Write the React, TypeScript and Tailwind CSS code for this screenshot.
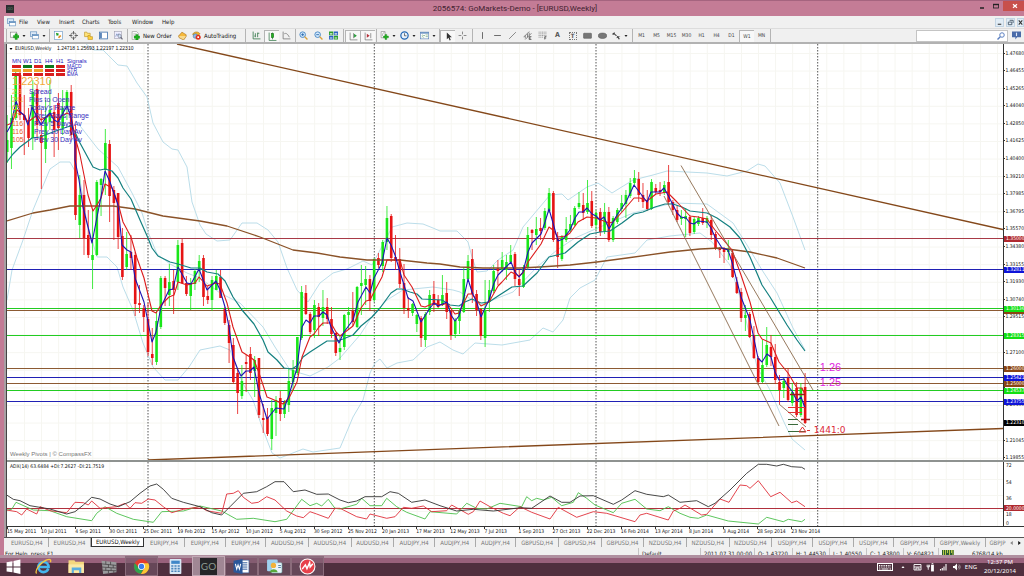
import type { ReactNode } from 'react';

/* ---------- chart data (plot units: one unit per screen dot) ---------- */

// colour, body top, body bottom, high, low - one entry per week
const CANDLES = `g 140 152 115 163,g 118 148 95 169,g 76 118 70 120,r 75 115 70 120,r 115 120 95 155,r 120 138 108 147,g 92 138 80 150,r 89 125 85 140,
r 135 143 110 189,g 117 149 100 163,g 110 122 80 130,r 112 130 105 157,r 103 128 93 150,g 108 128 90 135,g 92 108 90 120,r 92 135 85 140,
r 135 215 125 220,g 195 225 175 238,r 195 238 180 255,r 235 255 210 258,g 255 260 210 289,g 182 255 180 256,g 179 185 178 216,g 143 170 129 195,
r 144 196 140 222,r 190 203 186 240,r 193 237 193 249,r 236 277 228 280,g 254 267 232 270,r 252 258 235 270,r 255 304 252 316,r 303 305 285 313,
r 308 317 305 332,r 319 352 303 356,r 354 358 328 365,g 321 362 310 365,g 278 327 276 329,r 278 288 276 306,g 282 295 264 306,r 281 290 270 314,
g 245 282 240 290,r 243 283 239 284,r 283 294 276 296,g 283 296 278 310,g 271 284 269 290,g 261 271 255 282,r 258 297 255 306,r 296 300 286 304,
g 280 300 276 311,g 276 290 270 290,r 277 298 270 298,r 309 323 307 325,r 325 343 320 363,r 345 382 338 384,r 373 393 368 414,g 381 396 365 399,
r 362 364 355 392,r 354 373 347 380,g 360 371 356 397,r 358 415 358 418,r 418 420 404 433,r 417 434 408 436,g 408 439 400 450,g 400 413 396 436,
r 398 414 391 421,g 402 414 400 418,g 381 405 368 412,g 370 382 360 390,g 337 373 337 375,g 292 338 286 340,r 293 314 285 315,r 314 332 312 334,
g 305 330 300 338,r 307 317 303 336,g 307 318 290 326,r 307 319 298 324,r 319 334 307 338,r 333 353 333 356,g 348 352 336 360,g 315 347 314 350,
g 312 315 307 330,r 311 322 292 326,g 287 327 286 328,g 283 286 265 315,g 279 285 266 305,r 279 301 275 311,g 259 300 258 302,r 258 265 253 268,
g 242 266 240 272,g 218 242 206 250,r 216 258 214 262,r 257 261 235 270,r 259 284 248 288,r 283 308 264 314,r 308 310 297 318,g 304 313 303 316,
g 315 324 314 332,r 318 338 316 347,g 314 340 312 347,g 295 312 290 315,r 294 305 281 312,r 300 307 295 308,g 295 305 275 306,r 293 312 282 319,
r 311 335 310 340,g 320 334 318 338,g 311 321 308 334,g 279 312 267 313,g 261 279 255 281,r 259 294 249 303,r 294 310 290 316,r 309 336 308 340,
g 310 338 280 347,g 290 302 280 312,g 271 291 265 293,r 268 271 260 285,g 260 270 252 272,g 262 270 255 280,g 255 262 245 264,r 254 279 252 286,
r 279 285 270 296,g 267 287 265 288,g 235 268 227 270,r 230 233 229 250,g 229 235 217 245,r 228 231 218 240,g 211 228 208 230,g 193 211 188 213,
r 193 240 191 242,r 239 257 232 268,g 237 259 235 261,g 229 240 217 242,g 224 230 215 232,g 208 225 206 226,g 203 207 192 209,r 205 213 193 220,
g 203 212 180 214,r 201 226 191 228,g 213 225 210 230,r 212 232 208 236,g 212 231 203 234,r 212 240 207 242,g 218 240 216 242,g 210 222 208 224,
g 203 209 195 212,g 195 204 190 218,g 183 196 178 198,g 178 183 170 185,r 179 195 172 202,r 195 202 183 208,r 200 209 190 211,g 182 209 179 210,
r 188 192 184 194,r 190 192 182 196,g 185 193 181 195,r 182 202 165 205,r 202 210 200 215,r 210 220 205 222,g 217 219 210 225,g 216 219 208 237,
r 217 233 215 236,g 219 232 217 234,g 218 224 216 226,r 218 223 208 225,g 218 223 216 228,r 220 235 216 240,r 234 249 232 250,r 248 250 247 258,
r 249 252 247 263,g 249 252 240 260,r 253 277 250 278,r 282 293 277 294,r 292 318 288 322,g 315 318 305 331,r 314 337 312 338,r 335 358 326 359,
r 358 382 356 385,g 365 382 340 383,g 345 365 327 367,r 347 357 335 366,r 357 380 344 384,r 382 390 375 404,g 381 388 378 398,r 378 400 368 402,
g 392 403 383 406,r 388 415 382 417,g 388 415 383 417,r 387 423 373 424`
  .split(',')
  .map((row, i) => {
    const [kind, top, bottom, high, low] = row.trim().split(' ');
    return { x: 7.2 + i * 4.267, color: kind === 'g' ? '#19e619' : '#e61414', top: +top, bottom: +bottom, high: +high, low: +low };
  });

const FAST =
  '7,132 11,125 16,101 20,112 24,115 28,125 32,107 37,117 41,125 46,117 50,113 54,120 58,122 63,113 67,106 71,117 75,145 75,160 79,180 83,207 92,243 97,217 101,197 105,171 110,182 118,205 122,245 127,250 131,252 135,278 144,302 152,342 156,332 161,307 169,290 173,289 178,267 187,283 191,284 199,269 207,290 216,281 220,290 225,307 229,327 233,357 238,370 241,376 246,371 250,371 254,367 259,393 267,419 276,408 284,409 289,395 297,368 302,327 306,320 310,323 314,316 319,316 323,312 327,315 331,327 339,343 344,332 353,320 358,302 366,287 370,293 374,278 382,263 387,238 391,245 395,255 400,272 408,298 413,301 421,322 430,308 434,303 438,306 447,302 451,315 455,321 459,316 464,297 468,279 472,292 477,303 481,317 485,308 489,300 494,283 498,275 502,271 511,262 515,272 519,277 523,272 528,252 532,243 541,234 545,222 549,209 553,223 558,241 563,239 570,230 575,218 579,212 583,212 587,208 592,214 596,216 600,220 604,217 609,229 617,215 626,202 634,185 647,202 651,192 660,192 664,188 669,197 677,213 681,217 686,218 690,223 694,224 698,221 707,222 711,228 715,237 722,248 728,250 732,262 741,297 750,320 758,358 762,362 767,354 771,357 775,372 779,380 784,379 788,386 792,391 797,401 801,397 805,408';

const MEDIUM =
  '7,125 12,123 17,110 24,115 28,122 37,115 41,120 50,115 58,118 67,113 71,115 75,137 80,155 88,195 93,211 97,205 101,198 105,184 112,188 118,203 123,222 131,237 137,258 144,278 152,311 156,313 161,305 169,297 174,295 178,282 187,285 195,283 199,277 207,286 216,283 220,284 227,303 233,327 242,352 250,357 254,360 259,373 267,397 272,399 283,404 289,398 297,382 302,357 310,337 314,334 319,327 323,323 331,323 336,332 340,336 353,326 361,308 366,301 370,300 374,292 382,277 387,260 391,260 400,260 404,275 412,287 421,306 425,307 434,303 442,305 447,303 455,314 459,313 468,294 472,294 481,306 489,302 498,286 502,282 511,272 519,276 523,273 528,262 541,244 549,227 553,230 558,237 566,236 570,233 578,222 587,217 596,218 609,223 613,222 622,212 634,198 640,198 647,201 656,194 667,192 677,202 690,216 698,217 707,219 715,230 732,250 741,275 750,302 758,333 762,339 771,343 779,362 788,373 797,388 802,388 805,395';

const SLOW =
  '7,162 13,154 20,147 32,138 40,137 53,132 67,127 71,126 75,132 80,143 93,167 100,170 105,169 112,171 118,178 123,188 131,199 140,220 148,238 152,248 158,256 170,262 178,264 191,268 200,268 207,272 218,274 225,281 233,297 242,310 254,324 263,340 268,352 277,360 284,368 292,369 298,365 303,357 310,352 327,341 337,341 343,339 353,335 361,326 372,317 380,308 391,293 397,289 402,289 410,292 417,294 422,299 442,300 450,305 459,306 465,302 472,299 481,303 489,302 498,296 512,287 523,286 537,273 549,257 557,255 565,253 578,242 590,234 600,232 610,231 622,223 634,214 643,212 655,207 665,204 673,204 682,207 690,211 707,213 717,218 730,227 740,238 750,257 762,285 770,297 787,325 797,340 805,351';

const LONG =
  '7,221 33,213 50,210 70,206 87,206 113,206 135,209 163,216 200,221 227,226 260,237 293,250 317,253 340,257 367,260 400,260 427,263 440,264 460,267 483,268 520,268 540,267 570,265 597,262 627,258 670,252 700,249 720,248 750,252 777,258 805,268';

const BAND_UPPER =
  '86,44 94,50 103,50 118,65 127,66 137,83 147,97 153,123 163,142 172,149 178,150 187,167 192,202 200,225 206,234 217,241 230,240 242,223 257,223 268,230 278,242 287,268 297,290 308,302 320,283 333,273 347,269 363,261 372,265 387,237 392,227 407,223 423,224 433,228 440,231 457,231 468,242 472,257 477,272 487,271 498,260 513,250 523,227 550,195 562,194 568,200 587,187 598,183 612,193 633,180 653,175 667,171 707,173 727,176 747,171 758,164 765,166 780,183 793,217 805,250';
const BAND_MIDDLE =
  '77,122 98,149 107,157 118,167 132,193 142,213 148,232 157,254 170,264 187,273 200,278 220,293 240,303 263,327 275,347 290,370 310,376 328,367 340,358 360,335 373,315 387,300 403,290 433,287 453,290 460,292 480,305 513,292 537,267 557,250 575,238 600,227 633,213 673,203 707,204 733,223 747,245 762,270 777,293 793,328 805,350';
const BAND_LOWER =
  '7,300 12,270 23,240 33,210 50,169 60,162 70,162 80,180 87,223 97,257 107,257 117,267 123,287 133,310 143,343 153,367 165,380 178,380 189,367 200,350 220,346 230,350 242,382 253,400 262,427 272,453 280,458 303,449 313,452 340,448 353,417 363,400 370,373 375,363 380,359 387,368 397,363 413,360 427,347 440,342 453,350 463,354 475,343 502,345 530,340 543,328 553,332 563,320 570,298 580,288 595,280 607,257 635,253 647,240 670,236 700,233 712,242 730,265 743,307 757,367 770,390 783,420 792,439 805,450';

const LEVELS = [
  { y: 238, color: '#a83a46', price: '1.35000', fill: '#b02a30' },
  { y: 269, color: '#2020b4', price: '1.32811', fill: '#0f14d8' },
  { y: 310, color: '#8c5a32', price: '1.30000', fill: '#8b4513' },
  { y: 308, color: '#22cc22', price: '1.30136', fill: '#12e012' },
  { y: 335, color: '#22cc22', price: '1.28315', fill: '#12e012' },
  { y: 368, color: '#8c5a32', price: '1.26000', fill: '#8b4513' },
  { y: 377, color: '#2020b4', price: '1.25421', fill: '#0f14d8' },
  { y: 383, color: '#8c5a32', price: '1.25000', fill: '#8b4513' },
  { y: 390, color: '#22cc22', price: '1.24537', fill: '#12e012' },
  { y: 401, color: '#2020b4', price: '1.23755', fill: '#0f14d8' },
  { y: 422, color: '', price: '1.22310', fill: '#000000' },
];

// Ticks that sit under a level tag carry no text.
const PRICES = [
  '1.47680', '1.46455', '1.45265', '1.44040', '1.42850', '1.41625', '1.40400', '1.39210', '1.37985', '1.36795', '1.35570', '1.34380',
  '1.33155', '1.31930', '1.30740', '1.29515', '', '1.27100', '', '', '1.23460', '', '1.21045', '1.19855',
];

const DATES = [
  '15 May 2011', '10 Jul 2011', '4 Sep 2011', '30 Oct 2011', '25 Dec 2011', '19 Feb 2012', '15 Apr 2012', '10 Jun 2012',
  '5 Aug 2012', '30 Sep 2012', '25 Nov 2012', '20 Jan 2013', '17 Mar 2013', '12 May 2013', '7 Jul 2013', '1 Sep 2013',
  '27 Oct 2013', '22 Dec 2013', '16 Feb 2014', '13 Apr 2014', '8 Jun 2014', '3 Aug 2014', '28 Sep 2014', '23 Nov 2014',
];

const YEAR_LINES = [148, 374.3, 596, 817.7];
const GRID_X = Array.from({ length: 58 }, (_, i) => 24.5 + i * 17.07);
const GRID_Y = Array.from({ length: 24 }, (_, i) => 53.5 + i * 17.6);

// Indicator samples come in three sections, three samples per plot unit.
const SECTIONS = [
  {
    x: 0,
    adx: '20,165 40,178 60,182 90,197 150,207 200,222 225,215 250,195 275,172 300,177 330,192 355,200 390,185 420,160 450,138 470,132 490,148 515,175 550,187 600,200 635,218 665,225 690,200 730,160 770,155 800,140 825,125 852,125 880,155 915,150 950,163 985,162 1020,175 1050,188',
    minus: '20,210 50,215 65,225 80,207 110,222 120,200 150,212 200,218 225,187 250,188 265,195 275,183 300,205 350,200 375,190 390,205 405,188 425,190 445,177 465,180 490,200 515,218 550,208 600,200 620,212 665,220 680,162 700,160 715,152 730,172 755,190 775,187 800,170 825,180 860,213 890,228 910,233 930,215 950,222 985,235 1005,205 1040,215',
    plus: '20,210 35,208 48,187 100,210 150,212 200,230 275,242 290,220 315,200 350,220 400,238 460,247 485,215 550,213 600,198 665,213 710,238 760,235 825,245 860,238 905,178 930,197 950,190 965,198 985,178 1005,205 1050,200',
  },
  {
    x: 340,
    adx: '0,180 25,188 50,183 75,170 125,170 150,155 175,160 215,187 255,180 300,197 350,213 400,208 460,213 510,207 540,203 575,205 630,168 665,187 690,187 720,168 760,167 820,193 845,180 885,152 920,163 970,170 985,165 1020,187 1050,183',
    minus: '0,205 50,230 80,237 90,222 140,235 165,230 190,202 215,205 250,198 275,215 320,212 335,195 385,223 400,215 420,183 450,200 490,220 510,227 540,200 575,217 630,237 655,202 710,232 760,215 800,220 885,245 900,225 920,220 985,240 1000,213 1040,195',
    plus: '0,207 50,193 65,175 90,197 125,197 140,175 170,200 200,217 255,237 270,215 350,222 380,190 410,205 440,207 480,190 545,200 560,170 575,182 590,175 610,180 635,172 665,197 700,187 715,158 740,175 765,195 820,218 845,190 885,178 920,207 960,212 985,200 1050,232',
  },
  {
    x: 680,
    adx: '0,187 50,182 85,200 105,190 150,150 200,100 235,73 260,73 290,78 310,73 335,80 365,82 375,88',
    minus: '0,205 15,195 65,225 80,223 120,177 147,187 180,135 200,137 210,145 235,122 272,170 300,157 335,188 350,183 375,200',
    plus: '0,220 30,232 55,235 80,225 145,243 235,252 260,232 310,245 325,238 365,245 375,238',
  },
];

const series = (key: 'adx' | 'minus' | 'plus') =>
  SECTIONS.flatMap((s, n) =>
    s[key]
      .split(' ')
      .map((p) => p.split(',').map(Number))
      .map(([x, y]) => [s.x + x / 3, 440 + y / 3])
      .filter(([x]) => n === SECTIONS.length - 1 || x < SECTIONS[n + 1].x),
  )
    .map(([x, y]) => `${x.toFixed(1)},${y.toFixed(1)}`)
    .join(' ');

/* ---------- toolbar glyphs ---------- */

const glyphs: Record<string, ReactNode> = {
  newChart: (<><rect x="1" y="2" width="11" height="9" fill="#fff" stroke="#777" /><path d="M9 5h4v3h3v4h-3v3H9v-3H6V8h3z" fill="#1fb01f" stroke="#0b7a0b" strokeWidth=".6" /></>),
  profiles: (<><rect x="1" y="1.500" width="11" height="8" fill="#dbe9f7" stroke="#4a7fb5" /><rect x="4" y="6" width="11" height="8" fill="#fff" stroke="#4a7fb5" /><path d="M4 7.500h11" stroke="#4a7fb5" strokeWidth="2" /></>),
  market: (<><rect x="1" y="1" width="14" height="14" fill="#fff" stroke="#5b8fc0" /><path d="M4 4l3 3M7 4v3H4" stroke="#1a9c1a" strokeWidth="2" fill="none" /><path d="M8 12l4-4" stroke="#e08a1a" strokeWidth="3" /></>),
  crosshair: (<><circle cx="8" cy="8" r="5" fill="none" stroke="#555" strokeWidth="1.300" /><path d="M8 0v6M8 10v6M0 8h6M10 8h6" stroke="#555" strokeWidth="1.500" /></>),
  folder: (<><path d="M1 2h4l1 2h5v6H1z" fill="#ffe27a" stroke="#b58a12" /><path d="M7 8h3l1 2h4v5H7z" fill="#ffd13b" stroke="#b58a12" /></>),
  panel: (<><rect x="1" y="2" width="14" height="12" fill="#fff" stroke="#4576b0" strokeWidth="1.500" /><path d="M2 3h3v10H2z" fill="#4576b0" /></>),
  tester: (<><rect x="1" y="1" width="12" height="12" fill="#eef" stroke="#99a" /><path d="M3 10l2-5 2 3 2-4" stroke="#5577aa" fill="none" /><circle cx="10" cy="9" r="3" fill="#cfe3f7" stroke="#667" /><path d="M12 11l3 4" stroke="#667" strokeWidth="2" /></>),
  order: (<><path d="M2 1h8l3 3v11H2z" fill="#fff" stroke="#888" /><path d="M4 5h6M4 7.500h6" stroke="#999" /><path d="M8.500 6h4v3h3v4h-3v3h-4v-3h-3V9h3z" fill="#1fb01f" stroke="#0b7a0b" strokeWidth=".6" /></>),
  book: (<><path d="M1 9l6-7 8 5-5 7z" fill="#f6b93b" stroke="#a86a08" /><path d="M1 9l1 3 8 4 5-7" fill="#f9d98a" stroke="#a86a08" /></>),
  auto: (<><path d="M1 6c3-6 11-5 13-1l-3 3H4z" fill="#f0b429" stroke="#a3720a" /><circle cx="6" cy="9" r="4" fill="#8db9e6" stroke="#3a6ea5" /><circle cx="11" cy="11" r="4.500" fill="#e0301e" /><rect x="9.500" y="9.500" width="3" height="3" fill="#fff" /></>),
  bars: <path d="M2 1v13h13M6 4v7M6 9H4M10 3v8M10 4h3" stroke="#3b7d4f" strokeWidth="1.500" fill="none" />,
  candles: (<><path d="M2 1v14h13M8 1v12" stroke="#3b7d4f" strokeWidth="1.400" fill="none" /><rect x="6" y="3" width="4" height="7" fill="#22b322" stroke="#136b13" /></>),
  line: <path d="M2 1v13h13M4 5c3-2 6 0 9 6" stroke="#777" strokeWidth="1.400" fill="none" />,
  zoomIn: (<><circle cx="6.500" cy="6.500" r="5" fill="#d3e8fb" stroke="#3c7fc0" strokeWidth="1.500" /><path d="M4 6.500h5M6.500 4v5" stroke="#2465a8" strokeWidth="1.500" /><path d="M10 10l5 5" stroke="#d9a13a" strokeWidth="2.500" /></>),
  zoomOut: (<><circle cx="6.500" cy="6.500" r="5" fill="#d3e8fb" stroke="#3c7fc0" strokeWidth="1.500" /><path d="M4 6.500h5" stroke="#2465a8" strokeWidth="1.500" /><path d="M10 10l5 5" stroke="#d9a13a" strokeWidth="2.500" /></>),
  tile: (<><path d="M0 1h7.500v6.500H0zM8.500 8.500H16V15H8.500z" fill="#2b9e2b" /><path d="M8.500 1H16v6.500H8.500zM0 8.500h7.500V15H0z" fill="#2b63c4" /><path d="M1.500 4h4.500v2H1.500zM10 4h4.500v2H10zM1.500 11.500h4.500v2H1.500zM10 11.500h4.500v2H10z" fill="#e9f4e9" /></>),
  shift: (<><path d="M2 1v13h13M8 2v9" stroke="#777" strokeWidth="1.300" fill="none" /><path d="M9 3l5 3.500L9 10z" fill="#2a9d3c" /></>),
  scroll: (<><path d="M2 1v13h13M12 2v9" stroke="#777" strokeWidth="1.300" fill="none" /><path d="M5 3l5 3.500L5 10z" fill="#b5303a" /></>),
  indicators: (<><path d="M2 1h7v11H2z" fill="#fff" stroke="#777" /><path d="M4 9c1-6 2-6 4-6" stroke="#777" fill="none" /><path d="M9 6h3v3h3v3h-3v3H9v-3H6V9h3z" fill="#1fb01f" stroke="#0b7a0b" strokeWidth=".6" /></>),
  clock: (<><circle cx="8" cy="8" r="6.500" fill="#e9f3fd" stroke="#2468b4" strokeWidth="2.200" /><path d="M8 4v4.500h3.500" stroke="#444" strokeWidth="1.300" fill="none" /></>),
  template: (<><rect x="0.500" y="2" width="15" height="12" fill="#fff" stroke="#4576b0" /><path d="M1 3.500h14" stroke="#4576b0" strokeWidth="2" /><path d="M3 8l2-1 2 2 2-2M3 11l2-1 2 2M10 7h4M10 10h4" stroke="#4e8f5c" fill="none" /></>),
  cursor: <path d="M5 1v12l3-3 2 5 2-1-2-4.500h4z" fill="#333" />,
  cross: <path d="M8 1v5M8 10v5M1 8h5M10 8h5" stroke="#666" strokeWidth="1.300" />,
  vline: <path d="M8 2v12" stroke="#555" strokeWidth="1.500" />,
  hline: <path d="M2 8h12" stroke="#555" strokeWidth="1.500" />,
  trend: <path d="M2 14L14 2" stroke="#666" strokeWidth="1.300" />,
  channel: (<><path d="M1 11L11 1M4 15L15 4M4 8v5M8 5v6M11 3v5" stroke="#555" strokeWidth="1.200" /><path d="M15 10h-4v5h4M11 12.500h3" stroke="#333" strokeWidth="1.200" fill="none" /></>),
  fibo: (<><path d="M1 2h14M1 5h14M1 8h14M1 11h9" stroke="#666" strokeDasharray="2 1" /><path d="M15 10h-3v5M12 12.500h2.500" stroke="#333" strokeWidth="1.200" fill="none" /></>),
  rect: <rect x="1" y="4" width="14" height="9" rx="1" fill="#777" stroke="#555" />,
  ellipse: <ellipse cx="8" cy="8.500" rx="7.500" ry="4.800" fill="#777" stroke="#555" />,
  arrows: <path d="M1 4l4-2v3l4 3-2 1-3-3-3 1zM9 9l6 1-3 1 2 3-2 1-2-3-2 1z" fill="#444" />,
};

function Glyph({ name, className = 'h-[9px] w-[9px]' }: { name: string; className?: string }) {
  return (
    <svg viewBox="0 0 16 16" className={`${className} shrink-0`} aria-hidden="true">
      {glyphs[name]}
    </svg>
  );
}

function Tool({ name, label, wide, pressed, children }: { name?: string; label: string; wide?: boolean; pressed?: boolean; children?: ReactNode }) {
  return (
    <button
      aria-label={label}
      className={`flex h-3 shrink-0 items-center justify-center gap-[3px] leading-none ${wide ? 'w-5' : 'w-[15px]'} ${
        pressed ? 'border-t border-l border-[#b5b5b5] bg-[#f8f8f8]' : ''
      }`}
    >
      {name ? <Glyph name={name} /> : children}
      {wide && (
        <svg viewBox="0 0 6 4" className="h-[2px] w-[4px]" aria-hidden="true">
          <path d="M0 0h6L3 4z" fill="#222" />
        </svg>
      )}
    </button>
  );
}

function Divider({ className }: { className: string }) {
  return (
    <span className={`flex h-[13px] shrink-0 justify-center ${className}`}>
      <span className="w-px bg-[#b4b4b4]" />
    </span>
  );
}

function TitleBar() {
  return (
    <header className="flex h-4 items-center border-t border-[#a5647f] bg-[#c47c96]">
      <span className="ml-[6px] flex h-2 w-2 items-center justify-center bg-[#2c2c30] text-[4px] leading-none text-[#5d8a68]">GO</span>
      <h1 className="flex-1 pl-[42px] text-center font-['Roboto',sans-serif] text-[8px] leading-none text-[#3f2230]">
        2056574: GoMarkets-Demo - [EURUSD,Weekly]
      </h1>
      <div className="flex h-[10px] self-start">
        <button aria-label="Minimize" className="flex w-[15px] items-center justify-center">
          <svg viewBox="0 0 8 8" className="h-2 w-2"><path d="M2 6h4" stroke="#222" strokeWidth="1.500" /></svg>
        </button>
        <button aria-label="Maximize" className="flex w-[14px] items-center justify-center">
          <svg viewBox="0 0 8 8" className="h-2 w-2"><rect x="1.500" y="2.500" width="5" height="3.500" fill="none" stroke="#222" strokeWidth=".8" /><path d="M1 2.500h6" stroke="#222" strokeWidth="1.400" /></svg>
        </button>
        <button aria-label="Close" className="flex w-[21px] items-center justify-center bg-[#c8504c]">
          <svg viewBox="0 0 8 8" className="ml-[3px] h-2 w-2"><path d="M2 2.200l4 3.600M6 2.200l-4 3.600" stroke="#fff" strokeWidth="1.200" /></svg>
        </button>
      </div>
    </header>
  );
}

const MENU = [
  { label: 'File', className: 'w-[18px]' },
  { label: 'View', className: 'w-[22px]' },
  { label: 'Insert', className: 'w-[23px]' },
  { label: 'Charts', className: 'w-[26px]' },
  { label: 'Tools', className: 'w-6' },
  { label: 'Window', className: 'w-[30px]' },
  { label: 'Help', className: 'w-6' },
];

function MenuBar() {
  return (
    <nav className="flex h-3 items-center bg-[#f0f0f0] pl-[3px] text-[6px] text-[#222]">
      <Glyph name="profiles" className="mr-[3px] h-[9px] w-[9px]" />
      {MENU.map((m) => (
        <button key={m.label} className={`h-3 text-left leading-[12px] ${m.className}`}>
          {m.label}
        </button>
      ))}
      <div className="ml-auto flex gap-[2px] pl-2">
        <button aria-label="Minimize chart" className="flex h-[9px] w-[9px] items-center justify-center border border-[#c3d5e4] bg-[#e1ecf5]">
          <svg viewBox="0 0 8 8" className="h-[7px] w-[7px]"><path d="M2 6h4" stroke="#333" strokeWidth="1.200" /></svg>
        </button>
        <button aria-label="Restore chart" className="flex h-[9px] w-[9px] items-center justify-center border border-[#c3d5e4] bg-[#e1ecf5]">
          <svg viewBox="0 0 8 8" className="h-[7px] w-[7px]"><path d="M3 1.500h4v3M1.500 3.500h4v3h-4z" fill="none" stroke="#456" /></svg>
        </button>
        <button aria-label="Close chart" className="flex h-[9px] w-[7px] items-center justify-center border border-[#c3d5e4] bg-[#e1ecf5]">
          <svg viewBox="0 0 8 8" className="h-[7px] w-[7px] shrink-0"><path d="M2 1.500l4 5M6 1.500l-4 5" stroke="#333" strokeWidth="1.200" /></svg>
        </button>
      </div>
    </nav>
  );
}

const FRAMES = ['M1', 'M5', 'M15', 'M30', 'H1', 'H4', 'D1', 'W1', 'MN'];

function Toolbar() {
  return (
    <div className="flex h-[14px] items-center border-t border-[#dcdcdc] bg-[#f0f0f0] text-[6px] text-[#111]">
      <Divider className="w-1" />
      <Tool name="newChart" label="New chart" wide />
      <Tool name="profiles" label="Profiles" wide />
      <Divider className="w-[3px]" />
      <Tool name="market" label="Market watch" />
      <Tool name="crosshair" label="Data window" />
      <Tool name="folder" label="Navigator" />
      <Tool name="panel" label="Terminal" />
      <Tool name="tester" label="Strategy tester" />
      <Divider className="w-[3px]" />
      <button className="flex h-3 w-[46px] shrink-0 items-center gap-[3px] pl-[2px] leading-none whitespace-nowrap">
        <Glyph name="order" /> New Order
      </button>
      <Tool name="book" label="MetaEditor" />
      <button className="flex h-3 w-[51px] shrink-0 items-center gap-[3px] pl-[2px] leading-none whitespace-nowrap">
        <Glyph name="auto" /> AutoTrading
      </button>
      <Divider className="w-2" />
      <Tool name="bars" label="Bar chart" />
      <Tool name="candles" label="Candlesticks" pressed />
      <Tool name="line" label="Line chart" />
      <Divider className="w-[2px]" />
      <Tool name="zoomIn" label="Zoom in" />
      <Tool name="zoomOut" label="Zoom out" />
      <Tool name="tile" label="Tile windows" />
      <Divider className="w-1" />
      <Tool name="shift" label="Auto scroll" pressed />
      <Tool name="scroll" label="Chart shift" pressed />
      <Divider className="w-[3px]" />
      <Tool name="indicators" label="Indicators" wide />
      <Tool name="clock" label="Periods" wide />
      <Tool name="template" label="Templates" wide />
      <Divider className="w-[2px]" />
      <Tool name="cursor" label="Cursor" pressed />
      <Tool name="cross" label="Crosshair" />
      <Divider className="w-[5px]" />
      <Tool name="vline" label="Vertical line" />
      <Tool name="hline" label="Horizontal line" />
      <Tool name="trend" label="Trendline" />
      <Tool name="channel" label="Channel" />
      <Tool name="fibo" label="Fibonacci" />
      <Tool label="Text"><span className="text-[7px] leading-none font-bold text-[#555]">A</span></Tool>
      <Tool label="Text label"><span className="flex h-[8px] w-[8px] items-center justify-center border border-dotted border-[#777] text-[6px] leading-none font-bold text-[#555]">T</span></Tool>
      <Tool name="rect" label="Rectangle" />
      <Tool name="ellipse" label="Ellipse" />
      <Tool name="arrows" label="Arrows" wide />
      <Divider className="w-1" />
      {FRAMES.map((f) => (
        <Tool key={f} label={f} pressed={f === 'W1'}>
          <span className="text-[5px] leading-none text-[#444]">{f}</span>
        </Tool>
      ))}
      <Divider className="w-[3px]" />
      <label className="ml-auto flex h-3 w-[92px] items-center border border-[#c4c4c4] bg-white">
        <input aria-label="Search" className="h-full min-w-0 flex-1 bg-transparent pl-1 outline-none" />
        <svg viewBox="0 0 16 16" className="mr-[2px] h-[8px] w-[8px]" aria-hidden="true">
          <circle cx="10" cy="6" r="4.500" fill="none" stroke="#5b7fc0" strokeWidth="2" />
          <path d="M6.500 9.500L1 15" stroke="#5b7fc0" strokeWidth="2.800" />
        </svg>
      </label>
      <button aria-label="Messages" className="flex w-4 items-center justify-center">
        <svg viewBox="0 0 16 16" className="h-[9px] w-[9px]"><path d="M0 1h16v10H9l-3 4v-4H0z" fill="#4a6ba8" /><path d="M7 3h2v6H7z" fill="#dfe8f8" /></svg>
      </button>
    </div>
  );
}

/* ---------- chart ---------- */

const SIGNALS = [
  ['#d91e1e', '#0e7a1c', '#d91e1e', '#0e7a1c', '#d91e1e'],
  ['#f0a028', '#f0a028', '#f0a028', '#d91e1e', '#d91e1e'],
  ['#d91e1e', '#d91e1e', '#d91e1e', '#d91e1e', '#d91e1e'],
];

const STATS = [
  { value: '2.3', label: 'Spread', color: 'text-[#f5b04a]', indent: 'w-[17px]' },
  { value: '241', label: 'Pips to Open', color: 'text-[#f5b04a]', indent: 'w-[17px]' },
  { value: '63', label: "Today's Range", color: 'text-[#f5a030]', indent: 'w-[17px]' },
  { value: '97', label: 'Prev Days Range', color: 'text-[#f09030]', indent: 'w-[22px]' },
  { value: '116', label: 'Prev 5 Days Av', color: 'text-[#e8601c]', indent: 'w-[22px]' },
  { value: '116', label: 'Prev 10 Day Av', color: 'text-[#e8601c]', indent: 'w-[22px]' },
  { value: '105', label: 'Prev 30 Day Av', color: 'text-[#e8501c]', indent: 'w-[22px]' },
];

function InfoPanel() {
  return (
    <div className="absolute top-0 left-0 z-10 text-[#111]">
      <p className="flex h-[9px] items-center gap-[2px] pl-[2px] text-[5px] leading-none whitespace-nowrap">
        <svg viewBox="0 0 6 4" className="h-[2px] w-[4px]" aria-hidden="true"><path d="M0 0h6L3 4z" fill="#000" /></svg>
        <span className="w-[40px]">EURUSD,Weekly</span>
        <span className="font-['Liberation_Sans',sans-serif]">1.24718 1.25693 1.22197 1.22310</span>
      </p>
      <div className="pt-1 pl-[5px] font-['Liberation_Sans',sans-serif]">
        <div className="flex h-[7px] items-center text-[6px] leading-none text-[#2a22c0]">
          {['MN', 'W1', 'D1', 'H4', 'H1'].map((t) => (
            <span key={t} className="w-[11px]">{t}</span>
          ))}
          <span>Signals</span>
        </div>
        {SIGNALS.map((row, r) => (
          <div key={r} className="flex h-[4px] items-center gap-[2px]">
            {row.map((c, i) => (
              <span key={i} className="h-[3px] w-[9px]" style={{ backgroundColor: c }} />
            ))}
            <span className="text-[5px] leading-[4px] text-[#2a22c0]">{['MACD', 'STR', 'EMA'][r]}</span>
          </div>
        ))}
        <p className="text-[11px] leading-[11px] text-[#f2a93b]">1.22310</p>
        {STATS.map((s) => (
          <p key={s.label} className="flex h-2 items-center text-[7px] leading-none whitespace-nowrap">
            <span className={`${s.indent} ${s.color}`}>{s.value}</span>
            <span className="text-[#3a30c0]">{s.label}</span>
          </p>
        ))}
      </div>
    </div>
  );
}

function PricePlot() {
  return (
    <div className="relative min-h-0 min-w-0 flex-1 overflow-hidden bg-white">
      <InfoPanel />
      <p className="absolute bottom-[3px] left-[3px] z-10 font-['Liberation_Sans',sans-serif] text-[6px] leading-none text-[#777]">Weekly Pivots | © CompassFX</p>
      <svg viewBox="7 44 996 416" preserveAspectRatio="none" className="absolute inset-0 h-full w-full" fill="none" role="img" aria-label="EURUSD weekly candlestick chart">
        <g stroke="#f6f6f1" strokeWidth="1">
          {GRID_X.map((x) => <path key={x} d={`M${x} 44V460`} />)}
          {GRID_Y.map((y) => <path key={y} d={`M7 ${y}H1003`} />)}
        </g>
        <g stroke="#555" strokeDasharray="1.500 1.500" strokeWidth="1">
          {YEAR_LINES.map((x) => <path key={x} d={`M${x} 44V460`} />)}
        </g>
        <g stroke="#b3d9e6" strokeWidth=".9">
          <polyline points={BAND_UPPER} />
          <polyline points={BAND_MIDDLE} />
          <polyline points={BAND_LOWER} />
        </g>
        {LEVELS.filter((l) => l.color).map((l) => (
          <path key={l.price} d={`M7 ${l.y + 0.5}H1003`} stroke={l.color} strokeWidth="1" />
        ))}
        <g>
          {CANDLES.map((c) => (
            <g key={c.x}>
              <path d={`M${c.x} ${c.high}V${c.low}`} stroke={c.color} strokeWidth=".8" />
              <rect x={c.x - 1.3} y={c.top} width="2.600" height={c.bottom - c.top} fill={c.color} />
            </g>
          ))}
        </g>
        <g strokeLinejoin="round">
          <polyline points={LONG} stroke="#8a5228" strokeWidth="1.300" />
          <polyline points={SLOW} stroke="#148080" strokeWidth="1.200" />
          <polyline points={MEDIUM} stroke="#dc1c1c" strokeWidth="1.100" />
          <polyline points={FAST} stroke="#1c14b4" strokeWidth="1.100" />
        </g>
        <path d="M177 44L1003 229.500M148 460L1003 428.500" stroke="#84481a" strokeWidth="1.300" />
        <path d="M681 165.500L813 390M664 196L779 426M779 404L806 427" stroke="#8a6a4c" strokeWidth=".9" />
        <path d="M788 407.500h17M788 412.500h14" stroke="#d33" strokeWidth="1" />
        <path d="M788 419.500h10M788 424.500h10M788 431.500h17" stroke="#3a6a3a" strokeWidth="1" />
        <path d="M790 394.500h15M801 419.500h9" stroke="#a01818" strokeWidth="1.400" />
        <path d="M799 432l3.500-5 3.500 5zM807 430.500h3" stroke="#d33" />
      </svg>
      <div className="absolute top-[76%] left-[81.6%] font-['Liberation_Sans',sans-serif] text-[11px] leading-[15px] text-[#e01ee0]">
        <p>1.26</p>
        <p>1.25</p>
      </div>
      <p className="absolute top-[91.600%] left-[81%] font-['DejaVu_Sans',sans-serif] text-[9px] leading-[11px] text-[#dc2a3a]">1441:0</p>
    </div>
  );
}

function PriceAxis() {
  return (
    <div className="relative flex w-[21px] shrink-0 flex-col justify-between border-l border-[#333] bg-white pt-[7px] font-['DejaVu_Sans_Condensed','DejaVu_Sans',sans-serif] text-[5px] text-[#111]">
      {PRICES.map((p, i) => (
        <span key={i} className="flex h-1 items-center leading-none before:mr-px before:h-px before:w-px before:bg-[#333]">{p}</span>
      ))}
      {LEVELS.map((l) => (
        <span
          key={l.price}
          className="absolute left-0 flex h-[6px] w-full -translate-y-1/2 items-center pl-[2px] text-[5px] leading-none text-white"
          style={{ top: `${((l.y + 0.5 - 44) / 416) * 100}%`, backgroundColor: l.fill }}
        >
          {l.price}
        </span>
      ))}
    </div>
  );
}

function IndicatorPlot() {
  return (
    <div className="flex h-[64px] shrink-0">
      <div className="relative min-w-0 flex-1 overflow-hidden bg-white">
        <svg viewBox="7 462 996 64" preserveAspectRatio="none" className="absolute inset-0 h-full w-full" fill="none" role="img" aria-label="ADX indicator">
          <g stroke="#f6f6f1">
            {GRID_X.map((x) => <path key={x} d={`M${x} 462V526`} />)}
            {[479, 495, 511].map((y) => <path key={y} d={`M7 ${y}.500H1003`} />)}
          </g>
          <g stroke="#555" strokeDasharray="1.500 1.500">
            {YEAR_LINES.map((x) => <path key={x} d={`M${x} 462V526`} />)}
          </g>
          <path d="M7 508.500H1003" stroke="#b0303c" />
          <polyline points={series('plus')} stroke="#4cc04c" strokeWidth=".9" />
          <polyline points={series('minus')} stroke="#e0303a" strokeWidth=".9" />
          <polyline points={series('adx')} stroke="#333" strokeWidth=".9" />
        </svg>
        <p className="absolute top-px left-[3px] text-[5px] leading-[6px] text-[#111]">ADX(14) 63.6484 +DI:7.2627 -DI:21.7519</p>
      </div>
      <div className="relative grid w-[21px] shrink-0 grid-rows-[17px_16px_16px_9px_6px] border-l border-[#333] bg-white pl-[2px] text-[5px] leading-[6px] text-[#111]">
        {['72', '54', '36', '18', '0'].map((v) => <span key={v}>{v}</span>)}
        <span className="absolute top-[43px] left-0 flex h-[6px] w-full items-center bg-[#b02a30] pl-[2px] leading-none text-white">20.0000</span>
      </div>
    </div>
  );
}

function TimeAxis() {
  return (
    <div className="flex h-[11px] shrink-0 border-t border-[#333] bg-white">
      <div className="grid min-w-0 flex-1 grid-cols-[repeat(24,minmax(0,341fr))_minmax(0,1776fr)] font-['DejaVu_Sans_Condensed','DejaVu_Sans',sans-serif] text-[5px] leading-[9px] text-[#111]">
        {DATES.map((d) => (
          <span key={d} className="relative whitespace-nowrap before:absolute before:top-0 before:left-0 before:h-[2px] before:w-px before:bg-[#333]">{d}</span>
        ))}
      </div>
      <div className="w-[21px] shrink-0" />
    </div>
  );
}

const TABS = [
  'EURUSD,H4', 'EURUSD,H4', 'EURUSD,Weekly', 'EURJPY,H4', 'EURJPY,H4', 'EURJPY,H4', 'AUDUSD,H4', 'AUDUSD,H4', 'AUDUSD,H4',
  'AUDJPY,H4', 'AUDJPY,H4', 'AUDJPY,H4', 'GBPUSD,H4', 'GBPUSD,H4', 'GBPUSD,H4', 'NZDUSD,H4', 'NZDUSD,H4', 'NZDUSD,H4',
  'USDJPY,H4', 'USDJPY,H4', 'USDJPY,H4', 'GBPJPY,H4', 'GBPJPY,Weekly', 'GBPJP',
];

function tabClass(name: string) {
  if (name === 'EURUSD,Weekly') return 'w-[53px] shrink-0 border border-t-0 border-[#333] bg-white text-[#111]';
  if (name === 'GBPJPY,Weekly') return 'w-[51px] shrink-0 border-r border-[#aaa]';
  if (name === 'GBPJP') return 'w-[23px] shrink-0';
  return name.includes('JPY') ? 'w-[41px] border-r border-[#aaa]' : 'w-[43px] border-r border-[#aaa]';
}

function ChartTabs() {
  return (
    <div className="flex h-[11px] shrink-0 border-t border-[#555] bg-[#f0f0f0] text-[6px] text-[#777]">
      <div className="flex min-w-0 flex-1 pl-[2px]">
        {TABS.map((t, i) => (
          <button key={i} className={`h-[9px] text-center leading-[8px] whitespace-nowrap ${tabClass(t)}`}>{t}</button>
        ))}
      </div>
      <button aria-label="Scroll tabs left" className="flex w-[9px] items-center pl-px"><svg viewBox="0 0 4 6" className="h-1 w-[3px]"><path d="M4 0v6L0 3z" fill="#888" /></svg></button>
      <button aria-label="Scroll tabs right" className="flex w-[6px] items-center"><svg viewBox="0 0 4 6" className="h-1 w-[3px]"><path d="M0 0v6l4-3z" fill="#111" /></svg></button>
    </div>
  );
}

function StatusBar() {
  const cell = 'border-l border-[#c4c4c4] pl-[3px]';
  return (
    <footer className="flex h-[7px] shrink-0 bg-[#f0f0f0] pl-px text-[6px] leading-[11px] whitespace-nowrap text-[#222]">
      <span className="flex-1">For Help, press F1</span>
      <span className={`${cell} w-[62px]`}>Default</span>
      <span className={`${cell} w-[54px]`}>2011.07.31 00:00</span>
      <span className={`${cell} w-[38px]`}>O: 1.43720</span>
      <span className={`${cell} w-[37px]`}>H: 1.44530</span>
      <span className={`${cell} w-[37px]`}>L: 1.40550</span>
      <span className={`${cell} w-[37px]`}>C: 1.43800</span>
      <span className={`${cell} w-[35px]`}>V: 604821</span>
      <span className={`${cell} w-[34px]`}>
        <svg viewBox="0 0 12 6" className="mt-[2px] h-[6px] w-3" aria-hidden="true">
          <path d="M0 0h12v6H0z" fill="#2b5d30" /><path d="M1.500 0v6M3.500 0v6M5.500 0v3M7.500 0v5M9.500 0v3M11 0v5" stroke="#b8c848" />
        </svg>
      </span>
      <span className="w-[52px]">6768/14 kb</span>
    </footer>
  );
}

/* ---------- taskbar ---------- */

function AppButton({ label, className, children }: { label: string; className?: string; children: ReactNode }) {
  return (
    <button aria-label={label} className={`flex h-[20px] shrink-0 items-center justify-center ${className ?? 'w-8'}`}>
      <svg viewBox="0 0 32 32" className="h-[17px] w-[17px]" aria-hidden="true">{children}</svg>
    </button>
  );
}

function Taskbar() {
  const open = 'w-[33px] border border-[#8b6c7b] bg-[#77596a]/60';
  return (
    <div className="flex h-[21px] shrink-0 items-end bg-[linear-gradient(#b090a0_0_3px,#98617b_3px_8px,#4f2f3e_8px)]">
      <AppButton label="Start" className="w-[27px]">
        <path d="M3 8l11-2v10H3zM16 5.500L29 3v13H16zM3 18h11v9L3 25.500zM16 18h13v12l-13-2.500z" fill="#fff" />
      </AppButton>
      <AppButton label="Internet Explorer">
        <path d="M25 20c-1.500 4-5 6.500-9 6.500A9.500 9.500 0 1 1 25.500 17H9" fill="none" stroke="#45b6ee" strokeWidth="5" />
        <path d="M3 29c-4-4 6-20 18-25 7-3 10-1 8 4" fill="none" stroke="#f5c542" strokeWidth="2.500" />
      </AppButton>
      <AppButton label="File Explorer" className="w-[34px]">
        <path d="M1 4h11l2 3h16v21H1z" fill="#f4d77e" /><path d="M1 12h29v16H1z" fill="#fbe9a6" /><path d="M7 18h18v10h-4v-5H11v5H7z" fill="#5aaee0" />
      </AppButton>
      <AppButton label="Firewall">
        <path d="M1 5l28 3v19L4 30z" fill="#9a9a9c" /><path d="M1 11l28 3M2 17l27 2M3 23l26 1M9 6v6M18 7v6M14 12v6M23 13v6M9 18v6M19 19v5M14 23v6M24 24v4" stroke="#4a4548" strokeWidth="1.500" />
      </AppButton>
      <AppButton label="Chrome" className={open}>
        <circle cx="16" cy="16" r="14" fill="#e33b2e" /><path d="M3.500 9.500A14 14 0 0 0 15 30l6-11-10 0z" fill="#2ea44f" /><path d="M15 30A14 14 0 0 0 29 10H16l6 9z" fill="#fcc934" /><circle cx="16" cy="16" r="6.500" fill="#fff" /><circle cx="16" cy="16" r="5" fill="#3b7ded" />
      </AppButton>
      <AppButton label="Calculator" className="w-[34px]">
        <rect x="5" y="2" width="22" height="28" rx="1.500" fill="#d9e8f5" /><rect x="8" y="5" width="16" height="6" fill="#3f87c8" /><path d="M8 15h4M14 15h4M20 15h4M8 20h4M14 20h4M20 20h4M8 25h4M14 25h4M20 25h4" stroke="#4a84bb" strokeWidth="3" />
      </AppButton>
      <button aria-label="GoMarkets" className="flex h-[20px] w-[33px] shrink-0 items-center justify-center border border-[#c3aab6] bg-[#a08794]">
        <span className="flex h-[17px] w-[17px] items-center justify-center bg-[#252528] font-['Lato',sans-serif] text-[10px] leading-none text-[#8b9a90]">GO</span>
      </button>
      <AppButton label="Word" className={open}>
        <rect x="14" y="4" width="16" height="24" fill="#fff" stroke="#2b579a" /><path d="M17 9h10M17 13h10M17 17h10M17 21h10" stroke="#2b579a" strokeWidth="1.800" /><path d="M1 5l17-3v28L1 27z" fill="#2b579a" /><path d="M4.500 11l2.500 10 2.500-8 2.500 8 2.500-10" fill="none" stroke="#fff" strokeWidth="2" />
      </AppButton>
      <AppButton label="Messenger" className={open}>
        <rect x="2" y="3" width="20" height="22" rx="2" fill="#9fd0ef" /><rect x="10" y="9" width="20" height="19" rx="2" fill="#e9f3fa" stroke="#7bb" /><circle cx="14" cy="14" r="5" fill="#f2b23a" /><path d="M7 27c1-8 14-8 15 0z" fill="#58a83c" /><path d="M23 14h5M23 18h5" stroke="#58a" strokeWidth="2" />
      </AppButton>
      <AppButton label="Trading app" className={open}>
        <circle cx="16" cy="16" r="14" fill="#e8404a" stroke="#fff" strokeWidth="2" /><path d="M6 21l6-8 3 7 5-11 1 8 5-6" fill="none" stroke="#fff" strokeWidth="2.800" />
      </AppButton>
      <div className="ml-auto flex h-[18px] items-center gap-[4px] pr-2 font-['Noto_Sans',sans-serif] text-[6px] text-white">
        <svg viewBox="0 0 32 16" className="h-2 w-4" aria-hidden="true"><rect x="1" y="1" width="30" height="14" fill="none" stroke="#fff" strokeWidth="2" /><path d="M4 5h24M4 8h24" stroke="#fff" strokeWidth="2" strokeDasharray="2 1.500" /><path d="M4 12h3M9 12h14M25 12h3" stroke="#fff" strokeWidth="2" /></svg>
        <svg viewBox="0 0 6 4" className="mx-[4px] h-[2px] w-[4px]" aria-hidden="true"><path d="M0 4h6L3 0z" fill="#fff" /></svg>
        <svg viewBox="0 0 16 16" className="h-[8px] w-[9px]" aria-hidden="true"><path d="M1 3h14v11H1zM1 8h14M5 14v-4h6v4" fill="none" stroke="#fff" strokeWidth="1.800" /></svg>
        <svg viewBox="0 0 16 16" className="h-[9px] w-[9px]" aria-hidden="true"><path d="M9 3h5v12H9z" fill="#fff" /><path d="M10 1h3M4 3v9M2 3v4h4V3" stroke="#fff" strokeWidth="1.500" fill="none" /></svg>
        <svg viewBox="0 0 16 16" className="h-[8px] w-[9px]" aria-hidden="true"><path d="M2 15v-3M5.500 15v-5M9 15V7M13 15V2" stroke="#fff" strokeWidth="2.200" /></svg>
        <svg viewBox="0 0 16 16" className="h-[8px] w-[9px]" aria-hidden="true"><path d="M1 6h3l5-5v14l-5-5H1z" fill="#fff" /><path d="M11 5c2 2 2 4 0 6M13 3c3 3 3 7 0 10" stroke="#fff" fill="none" /></svg>
        <span className="leading-none">ENG</span>
        <div className="pl-[3px] text-center leading-[9px] whitespace-nowrap">
          <p>12:37 PM</p>
          <p>20/12/2014</p>
        </div>
      </div>
    </div>
  );
}

export default function App() {
  return (
    <div className="flex min-h-screen flex-col bg-[#c27b95] font-['DejaVu_Sans_Condensed','DejaVu_Sans',sans-serif]">
      <TitleBar />
      <div className="flex flex-1 flex-col border-l-4 border-[#c27b95]">
        <MenuBar />
        <Toolbar />
        <main className="flex flex-1 flex-col border-t-2 border-[#b2b2b2]">
          <div className="flex flex-1 flex-col border-l-2 border-[#a9a0a4]">
            <div className="flex flex-1 flex-col border-l border-[#444]">
              <div className="flex flex-1">
                <PricePlot />
                <PriceAxis />
              </div>
              <div className="h-[2px] shrink-0 bg-[#8e9290]" />
              <IndicatorPlot />
              <TimeAxis />
            </div>
          </div>
          <ChartTabs />
        </main>
        <StatusBar />
      </div>
      <Taskbar />
    </div>
  );
}
